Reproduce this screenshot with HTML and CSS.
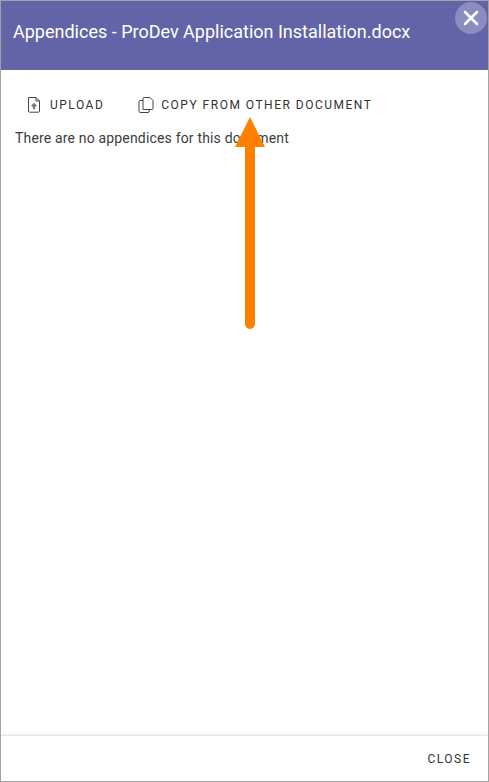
FILE: index.html
```html
<!DOCTYPE html>
<html lang="en">
<head>
<meta charset="utf-8">
<title>Appendices</title>
<link rel="stylesheet" href="styles.css">
</head>
<body>
<div class="dialog">
  <header class="header">
    <h1 class="title">Appendices - ProDev Application Installation.docx</h1>
    <button class="dismiss" aria-label="Close">
      <svg width="32" height="32" viewBox="0 0 32 32"><path d="M10 10 L22 22 M22 10 L10 22" fill="none" stroke="#fff" stroke-width="2.6" stroke-linecap="round"/></svg>
    </button>
  </header>
  <main class="content">
    <div class="toolbar">
      <button class="action action-upload">
        <svg class="icon" width="14" height="16" viewBox="0 0 14 16"><path d="M1.5 .5H9L12.5 4V14a1.2 1.2 0 0 1-1.2 1.2H2.7A1.2 1.2 0 0 1 1.5 14Z M9 .5V4H12.5" fill="none" stroke="#444" stroke-width="1"/><path d="M7 5.8 L10 8.8 L8 10 V12.2 H6 V10 L4 8.8 Z" fill="#777"/></svg>
        UPLOAD
      </button>
      <button class="action action-copy">
        <svg class="icon icon-copy" width="16" height="16" viewBox="0 0 16 16"><path d="M5 12.5V1.7A1.2 1.2 0 0 1 6.2 .5H12L15 3.5V11.3A1.2 1.2 0 0 1 13.8 12.5Z" fill="none" stroke="#444"/><path d="M5 3.5H2.2A1.2 1.2 0 0 0 1 4.7V14.3A1.2 1.2 0 0 0 2.2 15.5H10A1.2 1.2 0 0 0 11.2 14.3V12.5" fill="none" stroke="#444"/></svg>
        COPY FROM OTHER DOCUMENT
      </button>
    </div>
    <p class="empty">There are no appendices for this document</p>
  </main>
  <footer class="footer">
    <button class="action close">CLOSE</button>
  </footer>
  <svg class="arrow" width="30" height="213" viewBox="0 0 30 213"><path d="M15 0 L30 30 H20 V207 A5 5 0 0 1 10 207 V30 H0 Z" fill="#ff8000"/></svg>
</div>
</body>
</html>
```
FILE: styles.css
```css
* { box-sizing: border-box; }
html, body { margin: 0; height: 100%; }
body { font-family: Roboto, "Liberation Sans", sans-serif; background: #fff; }
.dialog {
  position: relative;
  width: 489px;
  height: 782px;
  border: 1px solid #a3a3a3;
  display: flex;
  flex-direction: column;
  background: #fff;
  overflow: hidden;
}
.header {
  height: 69px;
  flex: none;
  background: #6264a7;
  display: flex;
  align-items: center;
  padding: 0 12px 8px;
}
.title {
  margin: 0;
  font-size: 18px;
  font-weight: 400;
  color: #fff;
  line-height: 24px;
}
.dismiss {
  position: absolute;
  top: 1px;
  right: 1px;
  width: 32px;
  height: 32px;
  padding: 0;
  border: 0;
  border-radius: 50%;
  background: #8b8cbf;
  display: flex;
}
.content { flex: 1; padding: 20px 14px 0; }
.toolbar { display: flex; align-items: center; height: 30px; }
.action {
  border: 0;
  background: none;
  padding: 0;
  font: 400 12px/16px Roboto, "Liberation Sans", sans-serif;
  letter-spacing: 1.5px;
  color: #333;
  display: flex;
  align-items: center;
}
.action-upload { margin-left: 12px; }
.action-copy { margin-left: 34px; }
.icon { flex: none; margin-right: 9px; }
.icon-copy { margin-right: 7px; }
.empty {
  margin: 8px 0 0;
  font-size: 14px;
  line-height: 20px;
  letter-spacing: .17px;
  color: #3c3c3c;
}
.footer {
  height: 46px;
  flex: none;
  border-top: 1px solid #e6e6e6;
  box-shadow: 0 -1px 3px rgba(0,0,0,.08);
  display: flex;
  align-items: center;
  justify-content: flex-end;
  padding: 0 17px 0 0;
}
.arrow { position: absolute; left: 234px; top: 116px; }
```
